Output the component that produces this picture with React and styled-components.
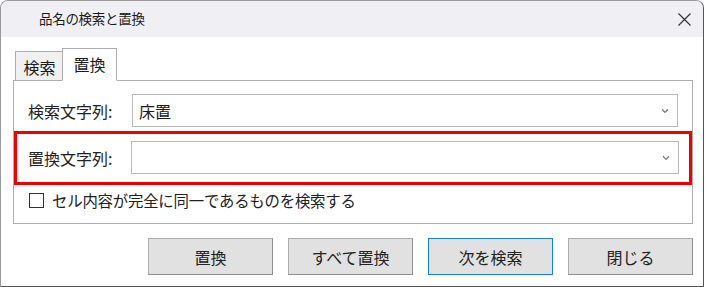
import React from "react";
import styled, { createGlobalStyle } from "styled-components";

const Global = createGlobalStyle`
  html, body { margin: 0; padding: 0; background: #ffffff; }
  body { font-family: "Noto Sans CJK JP", "Noto Sans", sans-serif; color: #1b1b1b; }
  * { box-sizing: border-box; }
`;

const Window = styled.div`
  width: 704px;
  height: 287px;
  border: 1px solid #9a9a9a;
  border-right-color: #555;
  border-bottom-color: #555;
  border-radius: 8px 8px 0 0;
  background: #fff;
  display: flex;
  flex-direction: column;
  overflow: hidden;
`;

const TitleBar = styled.div`
  height: 36px;
  flex: none;
  background: #f0eff4;
  display: flex;
  align-items: center;
  justify-content: space-between;
  padding: 0 11px 0 38px;
`;

const Title = styled.span`
  font-size: 13.5px;
  line-height: 1;
  letter-spacing: -0.3px;
  color: #1a1a1a;
`;

const CloseButton = styled.button`
  width: 16px;
  height: 16px;
  padding: 0;
  border: none;
  background: transparent;
  display: flex;
  align-items: center;
  justify-content: center;
`;

const Body = styled.div`
  display: flex;
  flex-direction: column;
  padding: 11px 10px 0 12px;
`;

const TabRow = styled.div`
  display: flex;
  align-items: flex-end;
  height: 33px;
  padding-left: 2px;
  position: relative;
  z-index: 1;
  margin-bottom: -1px;
`;

const Tab = styled.div`
  display: flex;
  align-items: center;
  justify-content: center;
  font-size: 16px;
  line-height: 1;
  border: 1px solid #adadad;
  ${(p) =>
    p.$active
      ? `height: 33px; width: 55px; background: #fff; border-bottom-color: #fff; margin-left: -1px; padding-bottom: 2px;`
      : `height: 30px; width: 48px; background: #f0f0f0; border-right: none; padding-top: 1px;`}
`;

const Panel = styled.div`
  height: 144px;
  border: 1px solid #adadad;
  background: #fff;
  display: flex;
  flex-direction: column;
  padding-top: 13px;
`;

const Row = styled.div`
  display: flex;
  align-items: center;
  padding: 0 14px 0 14px;
`;

const Highlight = styled.div`
  margin-top: 4px;
  border: 3px solid #f00000;
  padding: 7px 10px 8px 10px;
  display: flex;
  align-items: center;
`;

const Label = styled.span`
  width: 104px;
  flex: none;
  font-size: 16px;
  line-height: 1;
  color: #222;
  padding-left: ${(p) => p.$inset || 0}px;
`;

const Combo = styled.div`
  flex: 1;
  height: 33px;
  border: 1px solid #b9b9b9;
  display: flex;
  align-items: center;
  justify-content: space-between;
  padding: 0 8px 0 6px;
  font-size: 16px;
  background: #fff;
`;

const Check = styled.label`
  display: flex;
  align-items: center;
  gap: 8px;
  margin: 8px 0 0 15px;
  font-size: 15.4px;
  line-height: 1;
  color: #222;
  letter-spacing: -0.2px;
`;

const Box = styled.span`
  width: 15px;
  height: 15px;
  border: 1px solid #333;
  background: #fff;
  flex: none;
`;

const Buttons = styled.div`
  display: flex;
  justify-content: flex-end;
  gap: 15px;
  margin-top: 14px;
  padding-right: 0;
`;

const Button = styled.button`
  width: 125px;
  height: 37px;
  font-family: inherit;
  font-size: 16px;
  color: #222;
  background: #e1e1e1;
  border: 1px solid ${(p) => (p.$focus ? "#1b7fd6" : "#adadad")};
  ${(p) => (p.$focus ? "" : "border-right-color: #8f8f8f; border-bottom-color: #8f8f8f;")}
  padding: 0;
`;

const Chevron = () => (
  <svg width="8" height="6" viewBox="0 0 8 6">
    <path d="M1 1.2 L4 4.4 L7 1.2" fill="none" stroke="#7a7a7a" strokeWidth="1.3" />
  </svg>
);

const CloseIcon = () => (
  <svg width="13" height="13" viewBox="0 0 13 13">
    <path d="M0.5 0.5 L12.5 12.5 M12.5 0.5 L0.5 12.5" stroke="#333" strokeWidth="1.2" />
  </svg>
);

export default function App() {
  return (
    <>
      <Global />
      <Window>
        <TitleBar>
          <Title>品名の検索と置換</Title>
          <CloseButton aria-label="閉じる">
            <CloseIcon />
          </CloseButton>
        </TitleBar>
        <Body>
          <TabRow>
            <Tab>検索</Tab>
            <Tab $active>置換</Tab>
          </TabRow>
          <Panel>
            <Row>
              <Label>検索文字列:</Label>
              <Combo>
                <span>床置</span>
                <Chevron />
              </Combo>
            </Row>
            <Highlight>
              <Label $inset={1}>置換文字列:</Label>
              <Combo>
                <span></span>
                <Chevron />
              </Combo>
            </Highlight>
            <Check>
              <Box />
              セル内容が完全に同一であるものを検索する
            </Check>
          </Panel>
          <Buttons>
            <Button>置換</Button>
            <Button>すべて置換</Button>
            <Button $focus>次を検索</Button>
            <Button>閉じる</Button>
          </Buttons>
        </Body>
      </Window>
    </>
  );
}
